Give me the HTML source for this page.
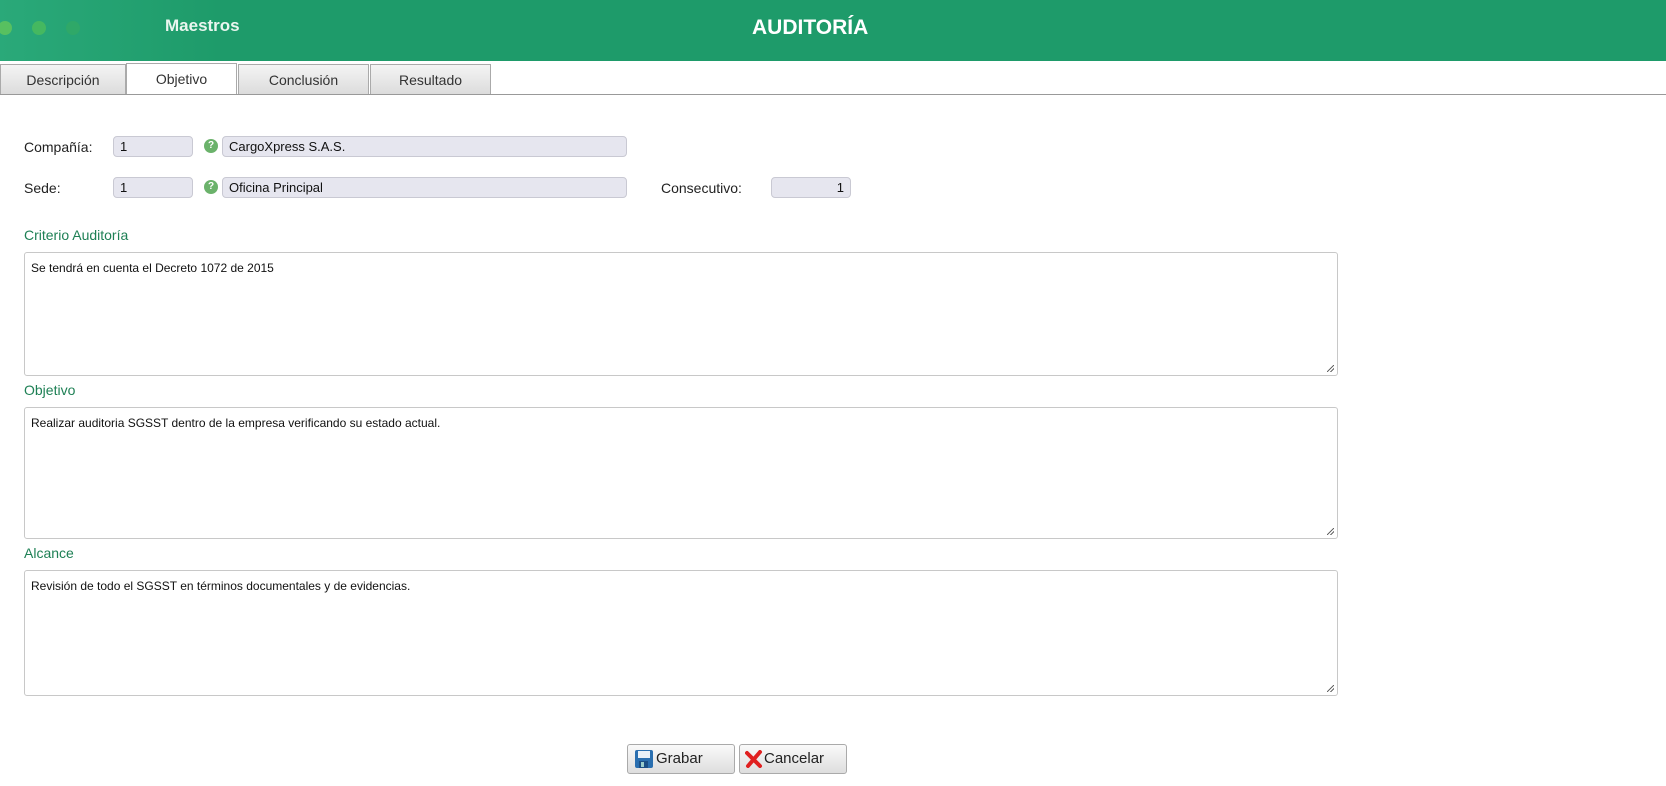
<!DOCTYPE html>
<html><head><meta charset="utf-8"><style>
body{margin:0;width:1666px;height:786px;background:#fff;font-family:"Liberation Sans",sans-serif;position:relative;overflow:hidden;color:#222}
.hdr{position:absolute;left:0;top:0;width:1666px;height:61px;background:linear-gradient(90deg,#2aa979 0,#1e9b6a 220px,#1e9b6a 100%)}
.dot{position:absolute;top:21px;width:14px;height:14px;border-radius:50%}
.a{position:absolute;white-space:nowrap}
.tab{position:absolute;top:64px;height:30px;border:1px solid #aaa;border-bottom:none;background:linear-gradient(#f4f4f4,#dcdcdc);font-size:14px;color:#333;text-align:center;line-height:30px;box-sizing:border-box}
.inp{position:absolute;height:21px;background:#e6e6ef;border:1px solid #c9c9d3;border-radius:4px;box-sizing:border-box;font-size:13px;line-height:19px;padding:0 6px;color:#111}
.lbl{position:absolute;font-size:14px;color:#222}
.glbl{position:absolute;font-size:14px;color:#1e8055}
.ta{position:absolute;left:24px;width:1314px;border:1px solid #c8c8c8;border-radius:3px;box-sizing:border-box;font-size:12px;padding:8px 6px;color:#111}
.ta:after{content:"";position:absolute;right:3px;bottom:3px;width:7px;height:7px;background:linear-gradient(135deg,transparent 45%,#666 45%,#666 55%,transparent 55%,transparent 70%,#666 70%,#666 80%,transparent 80%)}
.ic{position:absolute;width:14px;height:14px;border-radius:50%;background:#6bb26b;color:#fff;font-size:10px;font-weight:bold;text-align:center;line-height:14px}
.btn{position:absolute;top:744px;height:30px;border:1px solid #aaa;border-radius:3px;background:linear-gradient(#fafafa,#dedede);font-size:15px;line-height:28px;box-sizing:border-box;color:#222}
</style></head><body>
<div class="hdr">
<div class="dot" style="left:-2px;background:#58c060"></div>
<div class="dot" style="left:32px;background:#45b860"></div>
<div class="dot" style="left:66px;background:#2fa868"></div>
<div class="a" style="left:165px;top:16px;font-size:17px;font-weight:bold;color:#eaf6ef">Maestros</div>
<div class="a" style="left:752px;top:16px;font-size:21px;font-weight:bold;color:#fff">AUDITORÍA</div>
</div>
<div style="position:absolute;left:0;top:94px;width:1666px;height:1px;background:#999"></div>
<div class="tab" style="left:0;width:126px">Descripción</div>
<div class="tab" style="left:126px;width:111px;background:#fff;height:31px;top:63px">Objetivo</div>
<div class="tab" style="left:238px;width:131px">Conclusión</div>
<div class="tab" style="left:370px;width:121px">Resultado</div>

<div class="lbl" style="left:24px;top:139px">Compañía:</div>
<div class="inp" style="left:113px;top:136px;width:80px">1</div>
<div class="ic" style="left:204px;top:139px">?</div>
<div class="inp" style="left:222px;top:136px;width:405px">CargoXpress S.A.S.</div>
<div class="lbl" style="left:24px;top:180px">Sede:</div>
<div class="inp" style="left:113px;top:177px;width:80px">1</div>
<div class="ic" style="left:204px;top:180px">?</div>
<div class="inp" style="left:222px;top:177px;width:405px">Oficina Principal</div>
<div class="lbl" style="left:661px;top:180px">Consecutivo:</div>
<div class="inp" style="left:771px;top:177px;width:80px;text-align:right">1</div>

<div class="glbl" style="left:24px;top:227px">Criterio Auditoría</div>
<div class="ta" style="top:252px;height:124px">Se tendrá en cuenta el Decreto 1072 de 2015</div>
<div class="glbl" style="left:24px;top:382px">Objetivo</div>
<div class="ta" style="top:407px;height:132px">Realizar auditoria SGSST dentro de la empresa verificando su estado actual.</div>
<div class="glbl" style="left:24px;top:545px">Alcance</div>
<div class="ta" style="top:570px;height:126px">Revisión de todo el SGSST en términos documentales y de evidencias.</div>

<div class="btn" style="left:627px;width:108px;padding-left:28px">
<svg style="position:absolute;left:6px;top:4px" width="20" height="20" viewBox="0 0 20 20"><rect x="1" y="1" width="18" height="18" rx="2" fill="#2a6fb0"/><rect x="4" y="2" width="12" height="7" fill="#e8f0f8"/><rect x="5" y="12" width="9" height="7" fill="#1b4f86"/><rect x="7" y="13" width="3" height="5" fill="#9cc"/></svg>Grabar</div>
<div class="btn" style="left:739px;width:108px;padding-left:24px">
<svg style="position:absolute;left:5px;top:5px" width="18" height="18" viewBox="0 0 18 18"><path d="M2 3L15 16M15 2L3 16" stroke="#e02020" stroke-width="4" stroke-linecap="round"/></svg>Cancelar</div>
</body></html>
